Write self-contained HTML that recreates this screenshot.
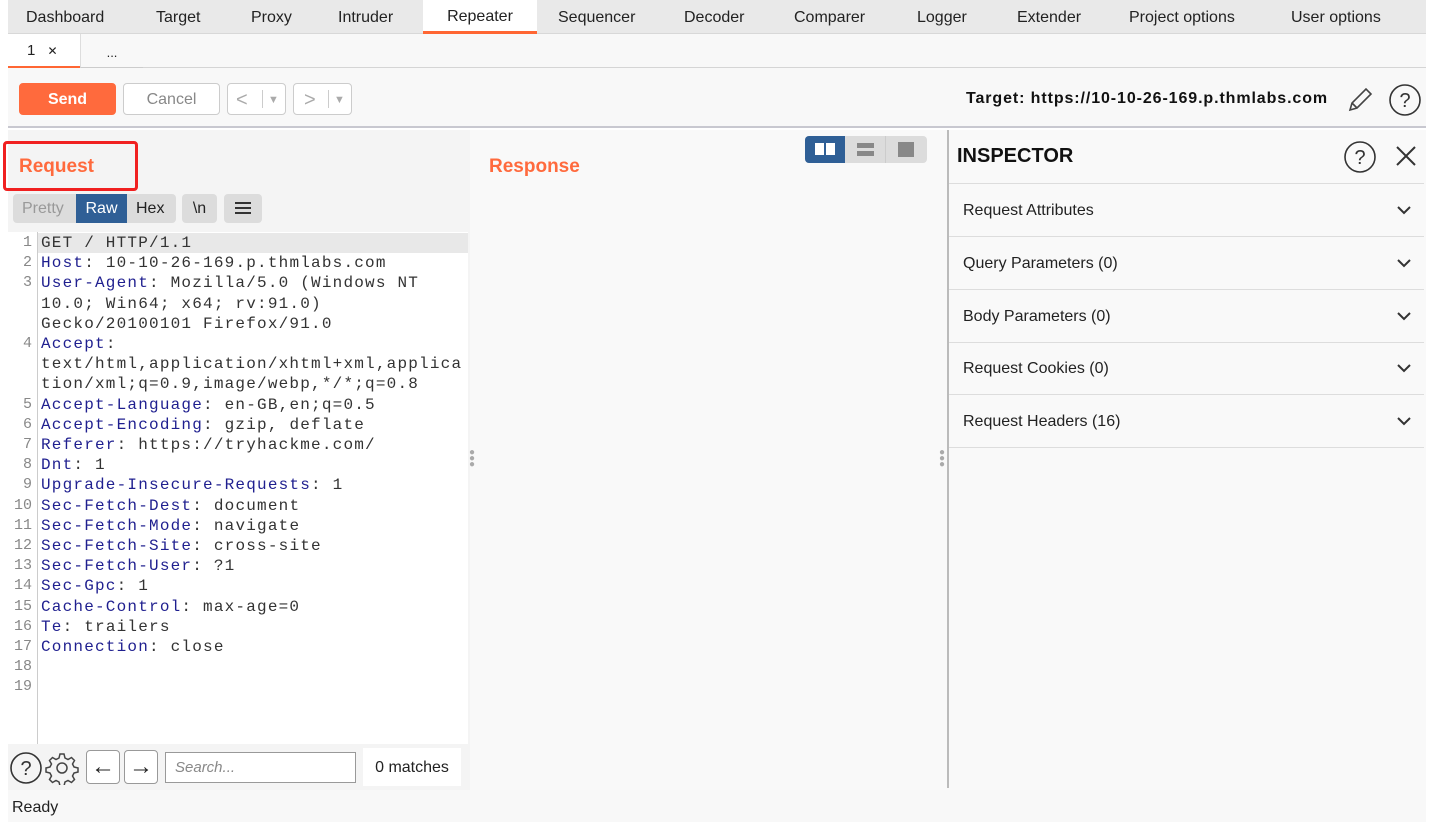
<!DOCTYPE html>
<html><head><meta charset="utf-8"><style>
*{box-sizing:border-box;margin:0;padding:0}
body{width:1430px;height:826px;background:#fff;font-family:"Liberation Sans",sans-serif;position:relative;overflow:hidden;color:#222}
.abs{position:absolute}
#tabs{left:8px;top:0;width:1418px;height:34px;background:#e9e9e9;border-bottom:1px solid #d8d8d8}
.tab{position:absolute;top:1px;height:33px;line-height:33px;font-size:16px;color:#222}
#sub{left:8px;top:34px;width:1418px;height:34px;background:#f8f8f8;border-bottom:1px solid #d5d5d5}
#tool{left:8px;top:68px;width:1418px;height:60px;background:#f8f8f8;border-bottom:2px solid #c8c8d0}
.btn{position:absolute;top:83px;height:32px;border:1px solid #ccc;border-radius:4px;background:#fff;font-size:16px;text-align:center;line-height:32px;color:#888}
#main{left:8px;top:130px;width:1418px;height:660px;background:#f9f9f9}
.code{font-family:"Liberation Mono",monospace;font-size:16px;letter-spacing:1.2px;line-height:20.2px;white-space:pre;color:#333}
.k{color:#1f1f8f}
.ln{font-family:"Liberation Mono",monospace;font-size:15px;line-height:20.2px;color:#888;text-align:right;white-space:pre}
.ins{position:absolute;left:949px;width:475px;height:53px;border-bottom:1px solid #ddd;font-size:16px;line-height:54px;padding-left:14px}
.chev{position:absolute;right:12px;top:20px}
</style></head><body>
<div id="tabs" class="abs">
<span class="tab" style="left:18px">Dashboard</span>
<span class="tab" style="left:148px">Target</span>
<span class="tab" style="left:243px">Proxy</span>
<span class="tab" style="left:330px">Intruder</span>
<span class="tab" style="left:415px;width:114px;background:#fff;border-bottom:3px solid #ff6633;text-align:center;top:0;height:34px">Repeater</span>
<span class="tab" style="left:550px">Sequencer</span>
<span class="tab" style="left:676px">Decoder</span>
<span class="tab" style="left:786px">Comparer</span>
<span class="tab" style="left:909px">Logger</span>
<span class="tab" style="left:1009px">Extender</span>
<span class="tab" style="left:1121px">Project options</span>
<span class="tab" style="left:1283px">User options</span>
</div>
<div id="sub" class="abs">
<div class="abs" style="left:0;top:0;width:72px;height:34px;background:#fff;border-bottom:2px solid #ff6633;font-size:15px;line-height:34px;padding-left:19px">1 <span style="font-size:12px;margin-left:8px">✕</span></div>
<div class="abs" style="left:72px;top:0;width:63px;height:34px;border-left:1px solid #ddd;border-bottom:1px solid #ccc;text-align:center;line-height:38px;font-size:13px">...</div>
</div>
<div id="tool" class="abs"></div>
<div class="btn" style="left:19px;width:97px;background:#ff6a3d;border-color:#ff6a3d;color:#fff;font-weight:bold">Send</div>
<div class="btn" style="left:123px;width:97px">Cancel</div>
<div class="btn" style="left:227px;width:59px;text-align:left;padding-left:8px;font-size:20px;color:#aaa">&lt;<span style="position:absolute;left:34px;top:6px;height:18px;border-left:1px solid #ccc"></span><span style="position:absolute;left:40px;font-size:11px">▼</span></div>
<div class="btn" style="left:293px;width:59px;text-align:left;padding-left:10px;font-size:20px;color:#aaa">&gt;<span style="position:absolute;left:34px;top:6px;height:18px;border-left:1px solid #ccc"></span><span style="position:absolute;left:40px;font-size:11px">▼</span></div>
<div class="abs" style="left:966px;top:90px;font-size:16px;font-weight:bold;color:#111;letter-spacing:0.9px">Target: https://10-10-26-169.p.thmlabs.com</div>
<svg class="abs" style="left:1344px;top:84px" width="32" height="32" viewBox="0 0 32 32"><path d="M6 26 L8 19 L22 5 L27 10 L13 24 Z M8 19 L13 24" fill="none" stroke="#444" stroke-width="1.6"/></svg>
<svg class="abs" style="left:1388px;top:83px" width="34" height="34" viewBox="0 0 34 34"><circle cx="17" cy="17" r="15" fill="none" stroke="#333" stroke-width="1.6"/><text x="17" y="24" text-anchor="middle" font-size="20" font-family="Liberation Sans" fill="#333">?</text></svg>

<div id="main" class="abs"></div>
<div class="abs" style="left:8px;top:130px;width:462px;height:660px;background:#f4f4f4"></div>
<div class="abs" style="left:3px;top:141px;width:135px;height:50px;border:3px solid #f02020;border-radius:4px"></div>
<div class="abs" style="left:19px;top:156px;font-size:19px;font-weight:bold;color:#ff6a3d">Request</div>
<div class="abs" style="left:489px;top:156px;font-size:19px;font-weight:bold;color:#ff6a3d">Response</div>
<div class="abs" style="left:13px;top:194px;width:163px;height:29px;background:#dcdcdc;border-radius:4px;font-size:16px;line-height:30px">
<span class="abs" style="left:9px;color:#999">Pretty</span>
<span class="abs" style="left:63px;width:51px;height:29px;background:#2f5f96;color:#fff;text-align:center">Raw</span>
<span class="abs" style="left:123px;color:#222">Hex</span></div>
<div class="abs" style="left:182px;top:194px;width:35px;height:29px;background:#dcdcdc;border-radius:4px;font-size:16px;line-height:30px;text-align:center">\n</div>
<div class="abs" style="left:224px;top:194px;width:38px;height:29px;background:#dcdcdc;border-radius:4px"><div class="abs" style="left:11px;top:8px;width:16px;height:2px;background:#333;box-shadow:0 5px 0 #333,0 10px 0 #333"></div></div>

<div class="abs" style="left:8px;top:232px;width:460px;height:512px;background:#fff"></div>
<div class="abs" style="left:37px;top:232px;height:512px;border-left:1px solid #ccc"></div>
<div class="abs" style="left:38px;top:233px;width:430px;height:20px;background:#e8e8e8"></div>
<div class="abs ln" style="left:8px;top:233px;width:24px">1
2
3


4


5
6
7
8
9
10
11
12
13
14
15
16
17
18
19</div>
<div class="abs code" style="left:41px;top:233px">GET / HTTP/1.1
<span class="k">Host</span>: 10-10-26-169.p.thmlabs.com
<span class="k">User-Agent</span>: Mozilla/5.0 (Windows NT
10.0; Win64; x64; rv:91.0)
Gecko/20100101 Firefox/91.0
<span class="k">Accept</span>:
text/html,application/xhtml+xml,applica
tion/xml;q=0.9,image/webp,*/*;q=0.8
<span class="k">Accept-Language</span>: en-GB,en;q=0.5
<span class="k">Accept-Encoding</span>: gzip, deflate
<span class="k">Referer</span>: https://tryhackme.com/
<span class="k">Dnt</span>: 1
<span class="k">Upgrade-Insecure-Requests</span>: 1
<span class="k">Sec-Fetch-Dest</span>: document
<span class="k">Sec-Fetch-Mode</span>: navigate
<span class="k">Sec-Fetch-Site</span>: cross-site
<span class="k">Sec-Fetch-User</span>: ?1
<span class="k">Sec-Gpc</span>: 1
<span class="k">Cache-Control</span>: max-age=0
<span class="k">Te</span>: trailers
<span class="k">Connection</span>: close</div>

<svg class="abs" style="left:9px;top:751px" width="34" height="34" viewBox="0 0 34 34"><circle cx="17" cy="17" r="15" fill="none" stroke="#333" stroke-width="1.6"/><text x="17" y="24" text-anchor="middle" font-size="20" font-family="Liberation Sans" fill="#333">?</text></svg>
<svg class="abs" style="left:45px;top:751px" width="34" height="34" viewBox="0 0 34 34"><g fill="none" stroke="#444" stroke-width="1.5"><circle cx="17" cy="17" r="5"/><path d="M15 3h4l1 4 3 1.5 3.5-2 3 3-2 3.5 1.5 3 4 1v4l-4 1-1.5 3 2 3.5-3 3-3.5-2-3 1.5-1 4h-4l-1-4-3-1.5-3.5 2-3-3 2-3.5-1.5-3-4-1v-4l4-1 1.5-3-2-3.5 3-3 3.5 2 3-1.5z"/></g></svg>
<div class="abs" style="left:86px;top:750px;width:34px;height:34px;border:1px solid #999;border-radius:4px;background:#fff;font-size:24px;text-align:center;line-height:32px">←</div>
<div class="abs" style="left:124px;top:750px;width:34px;height:34px;border:1px solid #999;border-radius:4px;background:#fff;font-size:24px;text-align:center;line-height:32px">→</div>
<div class="abs" style="left:165px;top:752px;width:191px;height:31px;border:1px solid #999;background:#fff;font-size:15px;font-style:italic;color:#888;line-height:30px;padding-left:9px">Search...</div>
<div class="abs" style="left:363px;top:748px;width:98px;height:38px;background:#fff;font-size:16px;line-height:40px;text-align:center">0 matches</div>
<div class="abs" style="left:469px;top:450px;color:#aaa;font-size:10px;line-height:6px">●<br>●<br>●</div>
<div class="abs" style="left:939px;top:450px;color:#aaa;font-size:10px;line-height:6px">●<br>●<br>●</div>

<div class="abs" style="left:805px;top:136px;width:122px;height:27px;background:#dcdcdc;border-radius:4px"></div>
<div class="abs" style="left:805px;top:136px;width:40px;height:27px;background:#2f5f96;border-radius:4px 0 0 4px"><div class="abs" style="left:10px;top:7px;width:9px;height:12px;background:#fff"></div><div class="abs" style="left:21px;top:7px;width:9px;height:12px;background:#fff"></div></div>
<div class="abs" style="left:857px;top:143px;width:17px;height:5px;background:#888"></div>
<div class="abs" style="left:857px;top:151px;width:17px;height:5px;background:#888"></div>
<div class="abs" style="left:885px;top:136px;height:27px;border-left:1px solid #ccc"></div>
<div class="abs" style="left:898px;top:142px;width:16px;height:15px;background:#888"></div>

<div class="abs" style="left:947px;top:130px;width:2px;height:658px;background:#bbb"></div>
<div class="abs" style="left:949px;top:130px;width:477px;height:658px;background:#f9f9f9"></div>
<div class="abs" style="left:957px;top:145px;font-size:20px;font-weight:bold;color:#111">INSPECTOR</div>
<svg class="abs" style="left:1343px;top:140px" width="34" height="34" viewBox="0 0 34 34"><circle cx="17" cy="17" r="15" fill="none" stroke="#333" stroke-width="1.6"/><text x="17" y="24" text-anchor="middle" font-size="20" font-family="Liberation Sans" fill="#333">?</text></svg>
<svg class="abs" style="left:1395px;top:145px" width="22" height="22" viewBox="0 0 22 22"><path d="M2 2L20 20M20 2L2 20" stroke="#333" stroke-width="2"/></svg>
<div class="abs" style="left:949px;top:183px;width:475px;border-top:1px solid #ddd"></div>
<div class="ins" style="top:184px">Request Attributes<svg class="chev" width="16" height="12" viewBox="0 0 16 12"><path d="M2 3l6 6 6-6" fill="none" stroke="#333" stroke-width="2"/></svg></div>
<div class="ins" style="top:237px">Query Parameters (0)<svg class="chev" width="16" height="12" viewBox="0 0 16 12"><path d="M2 3l6 6 6-6" fill="none" stroke="#333" stroke-width="2"/></svg></div>
<div class="ins" style="top:290px">Body Parameters (0)<svg class="chev" width="16" height="12" viewBox="0 0 16 12"><path d="M2 3l6 6 6-6" fill="none" stroke="#333" stroke-width="2"/></svg></div>
<div class="ins" style="top:342px">Request Cookies (0)<svg class="chev" width="16" height="12" viewBox="0 0 16 12"><path d="M2 3l6 6 6-6" fill="none" stroke="#333" stroke-width="2"/></svg></div>
<div class="ins" style="top:395px">Request Headers (16)<svg class="chev" width="16" height="12" viewBox="0 0 16 12"><path d="M2 3l6 6 6-6" fill="none" stroke="#333" stroke-width="2"/></svg></div>

<div class="abs" style="left:8px;top:790px;width:1418px;height:32px;background:#f8f8f8"></div>
<div class="abs" style="left:12px;top:799px;font-size:16px">Ready</div>
</body></html>
